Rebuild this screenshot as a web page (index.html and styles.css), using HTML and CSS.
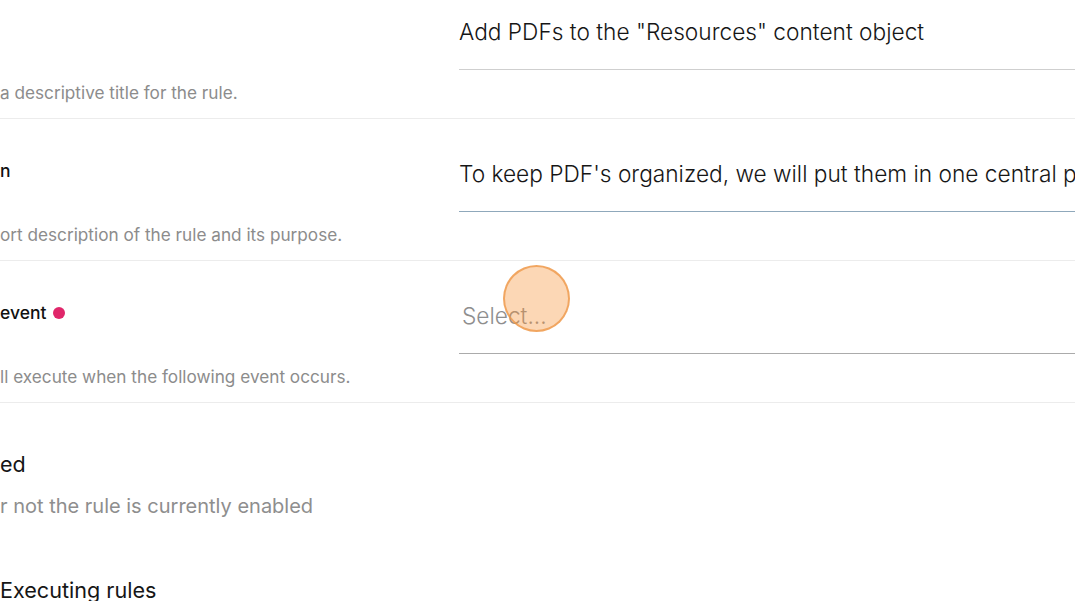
FILE: index.html
```html
<!DOCTYPE html>
<html lang="en">
<head>
<meta charset="utf-8">
<title>Rule settings</title>
<link rel="stylesheet" href="styles.css">
</head>
<body>
<div class="page">
  <form class="form">
    <div class="row">
      <div class="info">
        <div class="label"><span class="lead">Title</span></div>
        <div class="help"><span class="lead">Please enter </span>a descriptive title for the rule.</div>
      </div>
      <div class="field">
        <div class="input">Add PDFs to the "Resources" content object</div>
      </div>
    </div>
    <div class="row">
      <div class="info">
        <div class="label"><span class="lead">Descriptio</span>n</div>
        <div class="help"><span class="lead">Provide a sh</span>ort description of the rule and its purpose.</div>
      </div>
      <div class="field">
        <div class="input input-focus">To keep PDF's organized, we will put them in one central place.</div>
      </div>
    </div>
    <div class="row">
      <div class="info">
        <div class="label"><span class="lead">Triggering </span>event <span class="required"></span></div>
        <div class="help"><span class="lead">This rule wi</span>ll execute when the following event occurs.</div>
      </div>
      <div class="field">
        <div class="input input-select"><span class="placeholder">Select...</span></div>
      </div>
    </div>
    <div class="toggle-block">
      <div class="toggle-label"><span class="lead">Rule Enabl</span>ed</div>
      <div class="toggle-help"><span class="lead">Whether o</span>r not the rule is currently enabled</div>
    </div>
    <div class="toggle-block toggle-next">
      <div class="toggle-label toggle-big"><span class="lead">Stop </span>Executing rules</div>
    </div>
  </form>
  <div class="click"></div>
</div>
</body>
</html>
```

FILE: styles.css
```css
html, body {
  margin: 0;
  padding: 0;
  background: #ffffff;
  overflow: hidden;
}
body {
  width: 1075px;
  height: 601px;
  font-family: Inter, "Noto Sans", "Liberation Sans", sans-serif;
  color: #111;
}
.page {
  position: relative;
  width: 1075px;
  height: 601px;
  overflow: hidden;
}
.form {
  margin-top: -23px;
  margin-left: -91px;
  width: 1400px;
}
.lead {
  flex: 0 0 91px;
  width: 91px;
  display: flex;
  justify-content: flex-end;
  overflow: hidden;
  white-space: pre;
}
.row {
  display: grid;
  grid-template-columns: 550px 1fr;
  height: 141px;
  border-bottom: 1px solid #ececec;
}
.info {
  padding-top: 40px;
}
.label {
  display: flex;
  align-items: center;
  font-size: 17.5px;
  font-weight: 500;
  line-height: 24px;
  color: #111;
  white-space: pre;
}
.required {
  display: inline-block;
  width: 12px;
  height: 12px;
  margin-left: 2px;
  border-radius: 50%;
  background: #e0266a;
}
.help {
  display: flex;
  margin-top: 41px;
  font-size: 17.2px;
  line-height: 22px;
  color: #8c8c8c;
  white-space: pre;
}
.field {
  padding-top: 40px;
}
.input {
  height: 30px;
  line-height: 30px;
  padding-bottom: 22px;
  border-bottom: 1px solid #cfcfcf;
  font-size: 22.7px;
  font-weight: 300;
  color: #161616;
  white-space: nowrap;
  overflow: hidden;
  width: 760px;
}
.input-focus {
  border-bottom-color: #8fa8bb;
}
.input-select {
  border-bottom-color: #ababab;
  padding-left: 3px;
  height: 32px;
  padding-bottom: 20px;
}
.placeholder {
  color: #8e8e8e;
}
.toggle-block {
  padding-top: 47px;
}
.toggle-label {
  display: flex;
  font-size: 21.5px;
  font-weight: 400;
  line-height: 28px;
  color: #161616;
  white-space: pre;
}
.toggle-help {
  display: flex;
  margin-top: 14px;
  font-size: 20px;
  line-height: 28px;
  color: #8e8e8e;
  white-space: pre;
}
.toggle-next {
  padding-top: 56px;
}
.toggle-big {
  font-size: 21.6px;
}
.click {
  position: absolute;
  left: 503px;
  top: 265px;
  width: 63px;
  height: 63px;
  border-radius: 50%;
  background: rgba(248, 150, 60, 0.38);
  border: 2px solid rgba(238, 150, 70, 0.75);
}
```
